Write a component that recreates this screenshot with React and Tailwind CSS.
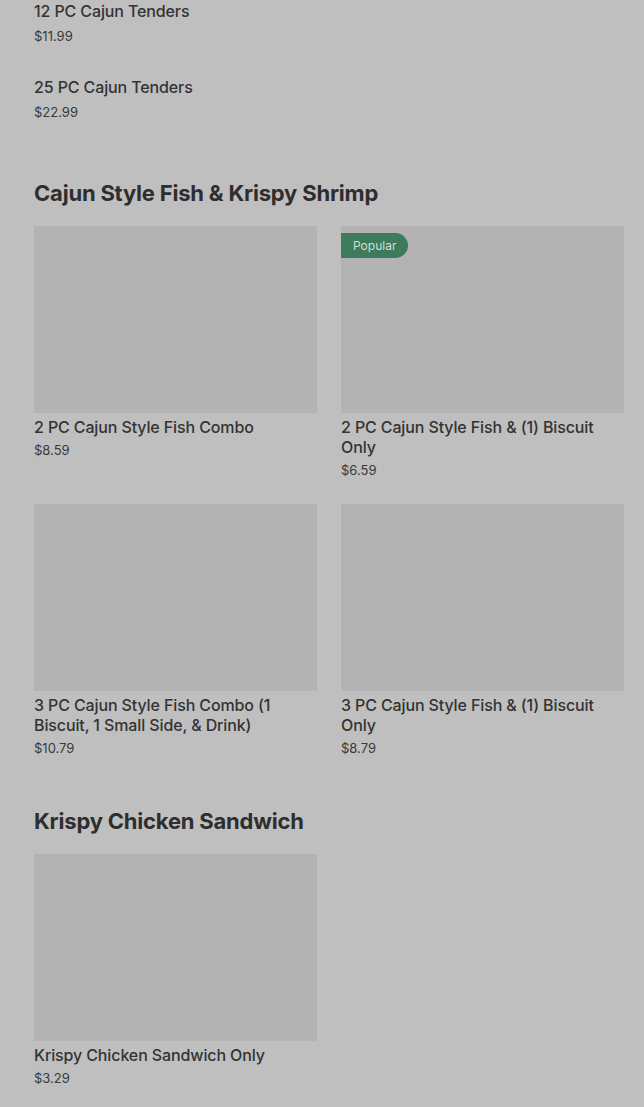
import React from "react";

const font = { fontFamily: "Inter, 'Liberation Sans', sans-serif" };

function Item({ name, price, popular }) {
  return (
    <div className="flex flex-col">
      <div className="relative h-[187px] bg-[#b3b3b3]">
        {popular && (
          <span className="absolute left-0 top-[7px] h-[25px] px-3 flex items-center rounded-r-full bg-[#3d7b5b] text-[12px] text-[#cfdfd4]">
            Popular
          </span>
        )}
      </div>
      <p className="mt-[4px] text-[16px] leading-[20px] font-medium tracking-[-0.12px] text-[#333]">{name}</p>
      <p className="mt-[5px] text-[13px] leading-[17px] text-[#3a3a3a]">{price}</p>
    </div>
  );
}

export default function App() {
  return (
    <div className="min-h-screen bg-[#bfbfbf] pl-[34px] pr-[20px] overflow-hidden" style={font}>

      {/* ── list items ── */}
      <div>
        {[
          { name: "12 PC Cajun Tenders", price: "$11.99" },
          { name: "25 PC Cajun Tenders", price: "$22.99" },
        ].map((item, i) => (
          <div key={i} className="h-[76px]">
            <p className="text-[16px] leading-[22px] font-medium tracking-[-0.12px] text-[#333]">{item.name}</p>
            <p className="mt-[3px] text-[13px] leading-[22px] text-[#3a3a3a]">{item.price}</p>
          </div>
        ))}
      </div>

      {/* ── fish & shrimp ── */}
      <h2 className="mt-[26px] text-[22px] leading-[30px] font-bold tracking-[-0.2px] text-[#2e2e2e]">
        Cajun Style Fish &amp; Krispy Shrimp
      </h2>
      <div className="mt-[18px] grid grid-cols-2 gap-x-[24px] gap-y-[25px]">
        <Item name="2 PC Cajun Style Fish Combo" price="$8.59" />
        <Item name="2 PC Cajun Style Fish & (1) Biscuit Only" price="$6.59" popular />
        <Item name="3 PC Cajun Style Fish Combo (1 Biscuit, 1 Small Side, & Drink)" price="$10.79" />
        <Item name="3 PC Cajun Style Fish & (1) Biscuit Only" price="$8.79" />
      </div>

      {/* ── sandwich ── */}
      <h2 className="mt-[49px] text-[22px] leading-[30px] font-bold tracking-[-0.2px] text-[#2e2e2e]">
        Krispy Chicken Sandwich
      </h2>
      <div className="mt-[18px] grid grid-cols-2 gap-x-[24px]">
        <Item name="Krispy Chicken Sandwich Only" price="$3.29" />
      </div>

    </div>
  );
}
